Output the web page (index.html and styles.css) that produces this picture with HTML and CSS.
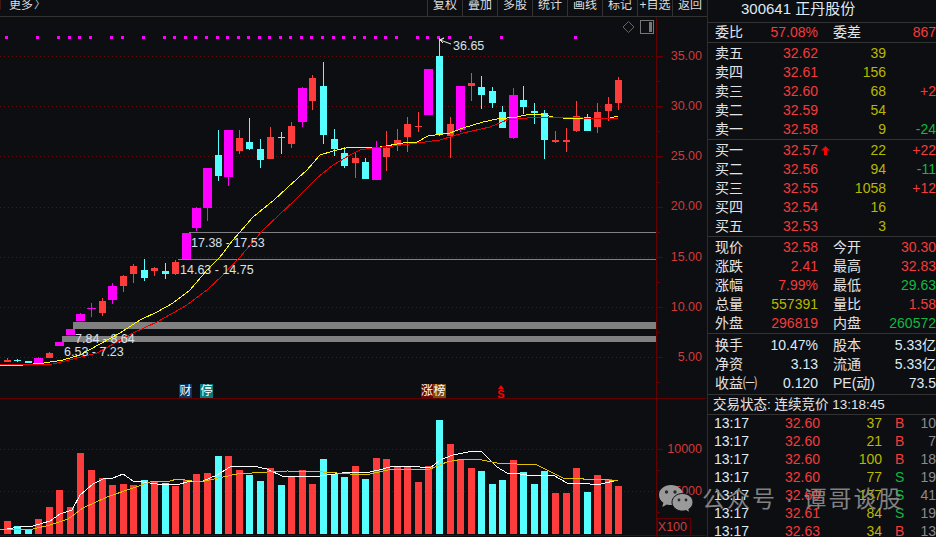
FILE: index.html
```html
<html>

<head>
  <meta charset="utf-8">
  <link rel="stylesheet" href="styles.css">
</head>

<body>
  <div class="wrapper">
    <div class="left">
      <div class="toolbar">
        <div class="crumb"><span class="cut">月</span><span>更多</span><span class="chev">〉</span></div>
        <div class="tool">复权</div>
        <div class="tool">叠加</div>
        <div class="tool">多股</div>
        <div class="tool">统计</div>
        <div class="tool">画线</div>
        <div class="tool">标记</div>
        <div class="tool">+自选</div>
        <div class="tool">返回</div>
      </div>
      <svg id="chart" class="chart" viewBox="0 17 706 520" width="706" height="520"></svg>
    </div>

    <div class="side">
      <div class="title">300641 正丹股份</div>

      <div class="stat top-stat">
        <span>委比</span><span class="num red">57.08%</span><span class="lbl2">委差</span><span class="num red">867</span>
      </div>

      <div class="block" id="sell"></div>
      <div class="block" id="buy"></div>

      <div class="block">
        <div class="stat"><span>现价</span><span class="num red">32.58</span><span class="lbl2">今开</span><span class="num red">30.30</span></div>
        <div class="stat"><span>涨跌</span><span class="num red">2.41</span><span class="lbl2">最高</span><span class="num red">32.83</span></div>
        <div class="stat"><span>涨幅</span><span class="num red">7.99%</span><span class="lbl2">最低</span><span class="num green">29.63</span></div>
        <div class="stat"><span>总量</span><span class="num olive">557391</span><span class="lbl2">量比</span><span class="num red">1.58</span></div>
        <div class="stat"><span>外盘</span><span class="num red">296819</span><span class="lbl2">内盘</span><span class="num green">260572</span></div>
      </div>

      <div class="block finance">
        <div class="stat"><span>换手</span><span class="num white">10.47%</span><span class="lbl2">股本</span><span class="num white">5.33亿</span></div>
        <div class="stat"><span>净资</span><span class="num white">3.13</span><span class="lbl2">流通</span><span class="num white">5.33亿</span></div>
        <div class="stat"><span>收益㈠</span><span class="num white">0.120</span><span class="lbl2">PE(动)</span><span class="num white">73.5</span></div>
      </div>

      <div class="status">交易状态: 连续竞价 13:18:45</div>

      <div id="trades"></div>
    </div>

    <div class="mark">
      <svg class="mark-icon" viewBox="0 0 36 30" width="36" height="30">
        <path class="bubble" d="M13 1C6 1 1 5.500 1 11c0 3.200 1.700 5.900 4.400 7.800L4.200 23l4.700-2.500c1.300.4 2.700.6 4.100.6 6.700 0 12-4.500 12-10.100S19.700 1 13 1z" />
        <circle class="eye" cx="8.500" cy="8" r="1.700" />
        <circle class="eye" cx="17" cy="8" r="1.700" />
        <path class="bubble front" d="M24.500 9.500c-5.800 0-10.500 3.900-10.500 8.800s4.700 8.800 10.500 8.800c1.200 0 2.400-.2 3.500-.5l3.800 2.100-1-3.400c2.500-1.600 4.200-4.100 4.200-7 0-4.900-4.700-8.800-10.500-8.800z" />
        <circle class="eye" cx="21" cy="16" r="1.400" />
        <circle class="eye" cx="28" cy="16" r="1.400" />
      </svg>
      <span class="mark-text">公众号 · 谭哥谈股</span>
    </div>
  </div>

  <script src="chart.js"></script>
</body>

</html>
```

FILE: styles.css
```css
body {
  margin: 0;
  background: #0d0e12;
  color: #e4e4e4;
  font-family: "Liberation Sans", "Noto Sans CJK SC", sans-serif;
  font-size: 14px;
  overflow: hidden;
}

.wrapper {
  display: flex;
  position: relative;
  width: 936px;
  height: 537px;
  overflow: hidden;
}

.left {
  width: 707px;
  flex: none;
}

.toolbar {
  display: flex;
  height: 16px;
  border-bottom: 1px solid #333;
  font-size: 12px;
  line-height: 11px;
  color: #dcdcdc;
  overflow: hidden;
}

.crumb {
  flex: 1;
  display: flex;
  overflow: hidden;
}

.cut {
  margin-left: -10px;
  margin-right: 7px;
}

.chev {
  color: #8fc4e8;
  margin-left: 1px;
}

.tool {
  width: 34px;
  text-align: center;
  border-left: 1px solid #333;
  white-space: nowrap;
}

.chart {
  display: block;
}

.grid {
  stroke: #6a0c0c;
  stroke-width: 1;
  stroke-dasharray: 1 3;
}

.axis {
  stroke: #640000;
  stroke-width: 1;
}

.level {
  stroke: #808080;
  stroke-width: 1;
}

.ma {
  fill: none;
  stroke-width: 1;
}

.ma-yellow {
  stroke: #ffff00;
}

.ma-red {
  stroke: #f00000;
}

.vol-white {
  stroke: #ffffff;
}

.vol-yellow {
  stroke: #e0c000;
}

.axis-text {
  fill: #d03a3a;
  font-size: 12.500px;
  text-anchor: end;
}

.level-text {
  fill: #d8e0e8;
  font-size: 12.500px;
}

.tag-text {
  fill: #ffffff;
  font-size: 12px;
  text-anchor: middle;
}

.s-text {
  fill: #ff0000;
  font-size: 11px;
  font-weight: bold;
  text-anchor: middle;
}

.side {
  width: 229px;
  flex: none;
  box-sizing: border-box;
  border-left: 1px solid #2c2c2c;
  overflow: hidden;
}

.title {
  height: 22px;
  line-height: 17px;
  padding-left: 33px;
  border-bottom: 1px solid #333;
  font-size: 15px;
  color: #dfeaf2;
}

.stat,
.quote {
  display: grid;
  height: 19px;
  line-height: 21px;
  padding-left: 7px;
  white-space: nowrap;
}

.stat {
  grid-template-columns: 40px 63px 60px 1fr;
}

.top-stat {
  line-height: 19px;
  border-bottom: 1px solid #333;
}

.quote {
  grid-template-columns: 40px 63px 68px 1fr;
}

.lbl2 {
  margin-left: 15px;
}

.block {
  padding-bottom: 1px;
  border-bottom: 1px solid #333;
}

.finance {
  padding-top: 1px;
  padding-bottom: 2px;
}

.num {
  text-align: right;
}

.price-cell {
  position: relative;
}

.arrow {
  position: absolute;
  left: 66px;
  top: 6px;
}

.status {
  height: 19px;
  line-height: 20px;
  padding-left: 5px;
  border-bottom: 1px solid #333;
  font-size: 13.500px;
}

.trade {
  display: grid;
  grid-template-columns: 40px 66px 62px 14px 1fr;
  height: 18px;
  line-height: 16px;
  padding-left: 6px;
  white-space: nowrap;
}

.trade .flag {
  padding-left: 13px;
}

.trade .seq {
  color: #8a8a8a;
  text-align: right;
}

.red {
  color: #f53a3a;
}

.green {
  color: #10b840;
}

.olive {
  color: #b8b800;
}

.white {
  color: #dcecf6;
}

.mark {
  position: absolute;
  left: 658px;
  top: 484px;
  display: flex;
  align-items: center;
  gap: 8px;
  pointer-events: none;
}

.mark-text {
  font-size: 23px;
  line-height: 26px;
  letter-spacing: 2px;
  color: #8b8b8b;
  opacity: .92;
  white-space: nowrap;
}

.bubble {
  fill: #9a9a9a;
}

.bubble.front {
  stroke: #0d0e12;
  stroke-width: 1;
}

.eye {
  fill: #2a2a2a;
}
```

FILE: chart.js
```js
/*---------------- candles: left, bodyTop, bodyBottom, wickTop, wickBottom, type, volumeTop ----------------*/
const candles = [
  [4, 360, 362, 358, 362, 'r', 521],
  [14, 360, 361, 359, 362, 'c', 526],
  [25, 361, 363, 361, 363, 'c', 529],
  [34, 358, 364, 357, 364, 'm', 519],
  [46, 353, 358, 352, 358, 'r', 507],
  [55, 342, 346, 342, 346, 'm', 490],
  [66, 329, 335, 329, 335, 'm', 507],
  [76, 314, 321, 313, 321, 'm', 453],
  [87, 308, 309, 303, 317, 'm', 470],
  [99, 301, 313, 298, 316, 'r', 478],
  [108, 286, 300, 283, 304, 'm', 485],
  [120, 276, 286, 275, 292, 'r', 484],
  [130, 266, 274, 264, 283, 'r', 485],
  [141, 270, 278, 259, 281, 'c', 480],
  [151, 268, 271, 267, 276, 'r', 481],
  [162, 271, 274, 263, 279, 'c', 483],
  [172, 262, 274, 260, 275, 'r', 486],
  [182, 233, 259, 233, 259, 'm', 480],
  [192, 208, 228, 207, 231, 'm', 474],
  [203, 168, 208, 168, 221, 'm', 473],
  [215, 155, 176, 130, 181, 'c', 456],
  [224, 130, 177, 130, 186, 'm', 456],
  [236, 138, 151, 130, 154, 'r', 470],
  [246, 142, 149, 118, 150, 'c', 475],
  [257, 149, 160, 139, 168, 'c', 481],
  [267, 137, 159, 127, 159, 'r', 468],
  [278, 137, 138, 132, 154, 'c', 485],
  [288, 126, 144, 122, 148, 'r', 477],
  [298, 88, 122, 87, 127, 'm', 470],
  [309, 78, 101, 75, 110, 'r', 484],
  [320, 86, 135, 62, 144, 'c', 459],
  [331, 139, 149, 129, 156, 'c', 474],
  [341, 153, 166, 147, 168, 'c', 477],
  [352, 158, 163, 153, 178, 'r', 466],
  [362, 162, 179, 158, 179, 'c', 479],
  [372, 147, 180, 141, 180, 'm', 458],
  [383, 148, 157, 131, 171, 'r', 459],
  [394, 140, 146, 129, 151, 'r', 466],
  [404, 124, 137, 117, 152, 'r', 466],
  [415, 126, 127, 112, 132, 'r', 482],
  [424, 69, 115, 69, 115, 'm', 466],
  [436, 56, 134, 38, 136, 'c', 420],
  [447, 124, 136, 117, 158, 'r', 444],
  [456, 86, 130, 86, 132, 'm', 459],
  [468, 83, 86, 73, 101, 'r', 468],
  [478, 87, 95, 76, 109, 'c', 471],
  [489, 91, 103, 87, 108, 'c', 484],
  [499, 112, 128, 106, 128, 'c', 480],
  [509, 95, 138, 88, 139, 'm', 460],
  [520, 100, 107, 86, 114, 'c', 472],
  [531, 111, 113, 103, 124, 'c', 484],
  [541, 113, 140, 110, 159, 'c', 471],
  [552, 140, 142, 131, 143, 'r', 493],
  [563, 140, 142, 128, 152, 'r', 493],
  [573, 116, 131, 101, 132, 'r', 468],
  [584, 117, 131, 114, 131, 'c', 492],
  [594, 112, 127, 103, 133, 'r', 475],
  [605, 104, 111, 97, 121, 'r', 479],
  [615, 80, 103, 77, 110, 'r', 486]
];

const colors = { r: '#ff3c3c', c: '#55ffff', m: '#ff00ff' };

const dots = [6, 37, 58, 69, 79, 90, 111, 122, 143, 164, 174, 185, 195, 206, 217, 227, 238, 248, 259, 269, 280, 290, 301, 311, 322, 333, 343, 354, 364, 375, 385, 396, 417, 427, 438, 449, 470, 501, 575];

/*---------------- moving averages ----------------*/
const maYellow = '0,365 23,365 44,363 63,360 80,355 100,344 120,333 140,320 157,312 173,303 190,290 207,270 220,257 233,240 253,217 274,200 287,188 307,170 320,155 333,151 350,147 380,147 403,143 417,142 428,136 450,133 463,128 483,122 497,119 517,117 530,114 540,114 553,117 563,118 583,119 610,118 618,116';
const maRed = '0,365 53,364 73,359 97,353 133,333 157,322 187,305 207,290 223,275 240,257 263,230 295,200 317,178 333,165 350,155 360,150 372,148 393,146 417,143 440,140 463,133 490,127 507,120 537,117 570,117 583,118 610,119 618,118';
const volWhite = '0,530 20,527 33,526 50,521 60,514 72,510 80,495 93,484 103,479 113,478 123,474 133,481 143,482 157,484 180,484 187,482 203,481 217,475 230,467 253,466 267,469 282,476 297,477 307,476 313,477 327,475 350,472 370,472 383,469 393,466 410,466 430,468 440,460 453,455 473,451 482,452 497,467 507,473 520,474 533,476 553,475 567,483 583,483 597,485 618,480';
const volYellow = '0,529 33,529 50,525 68,519 83,508 107,497 133,488 150,482 170,481 177,479 200,482 223,477 237,474 267,472 287,471 323,472 350,474 370,474 383,471 393,469 430,469 447,462 463,459 477,459 497,463 537,465 563,478 580,478 587,480 600,479 618,481';

/*---------------- helpers ----------------*/
const svg = document.getElementById('chart');
const NS = 'http://www.w3.org/2000/svg';

const add = (tag, attrs, text) => {
  const el = document.createElementNS(NS, tag);
  for (const k in attrs) el.setAttribute(k, attrs[k]);
  if (text) el.textContent = text;
  svg.appendChild(el);
  return el;
};

const rect = (x, y, w, h, fill) =>
  add('rect', { x: x, y: y, width: w, height: h, fill: fill, 'shape-rendering': 'crispEdges' });

const line = (x1, y1, x2, y2, cls) =>
  add('line', { x1: x1, y1: y1, x2: x2, y2: y2, class: cls, 'shape-rendering': 'crispEdges' });

/*---------------- grid and axis ----------------*/
[56.5, 106.5, 156.5, 207.5, 257.5, 307.5, 357.5, 449.5, 491.5].forEach(y => line(0, y, 656, y, 'grid'));

line(656.5, 17, 656.5, 537, 'axis');
line(0, 398.5, 706, 398.5, 'axis');
line(0, 535.5, 706, 535.5, 'axis');

[56.5, 81.5, 106.5, 131.5, 156.5, 182.5, 207.5, 232.5, 257.5, 282.5, 307.5, 332.5, 357.5, 382.5].forEach((y, i) =>
  line(657, y, i % 2 ? 660 : 663, y, 'axis')
);
[449.5, 470.5, 491.5, 512.5].forEach((y, i) => line(657, y, i % 2 ? 660 : 663, y, 'axis'));

[['35.00', 60], ['30.00', 110], ['25.00', 160], ['20.00', 210], ['15.00', 261], ['10.00', 311], ['5.00', 361], ['10000', 453], ['5000', 495]].forEach(a =>
  add('text', { x: 702, y: a[1], class: 'axis-text' }, a[0])
);

add('rect', { x: 657.5, y: 518.5, width: 33, height: 17, fill: 'none', stroke: '#640000' });
add('text', { x: 687, y: 531, class: 'axis-text' }, 'X100');

/* diamond and panel switch, top right of the chart */
add('polygon', { points: '628.5,21.5 634,27 628.5,32.5 623,27', fill: 'none', stroke: '#666' });
add('rect', { x: 640.5, y: 20.5, width: 13, height: 13, fill: 'none', stroke: '#777' });
rect(649, 22, 3, 10, '#777');

/*---------------- price levels ----------------*/
line(189, 232.5, 656, 232.5, 'level');
line(178, 259.5, 656, 259.5, 'level');
rect(73, 322, 583, 7, '#808080');
rect(62, 336, 594, 6, '#808080');

/*---------------- candles and volume ----------------*/
dots.forEach(x => rect(x - 1, 36, 3, 3, '#ff00ff'));

candles.forEach(c => {
  const w = c[5] == 'm' ? 9 : 7;
  const mid = c[0] + Math.floor(w / 2);
  rect(mid, c[3], 1, c[4] - c[3], colors[c[5]]);
  rect(c[0], c[1], w, c[2] - c[1], colors[c[5]]);
  // volume bar keeps the candle colour, magenta days count as red
  rect(mid - 3, c[6], 7, 534 - c[6], c[5] == 'c' ? colors.c : colors.r);
});

[[maYellow, 'ma-yellow'], [maRed, 'ma-red'], [volWhite, 'vol-white'], [volYellow, 'vol-yellow']].forEach(m =>
  add('polyline', { points: m[0], class: 'ma ' + m[1], 'shape-rendering': 'crispEdges' })
);

/*---------------- labels ----------------*/
[['36.65', 453, 50], ['17.38 - 17.53', 191, 247], ['14.63 - 14.75', 180, 274], ['7.84 - 8.64', 75, 343], ['6.53 - 7.23', 64, 356]].forEach(l =>
  add('text', { x: l[1], y: l[2], class: 'level-text' }, l[0])
);
add('polyline', { points: '451,44 440,40 444,38 440,40 443,43', fill: 'none', stroke: '#e8e8e8' });

[['财', 179, 13, '#0a3560'], ['停', 200, 13, '#0a7a7a'], ['涨', 421, 12, '#6a0505'], ['榜', 433, 13, '#7a4a08']].forEach(t => {
  rect(t[1], 384, t[2], 14, t[3]);
  add('text', { x: t[1] + t[2] / 2, y: 395, class: 'tag-text' }, t[0]);
});
add('polygon', { points: '501,385 504,389 498,389', fill: '#ff0000' });
add('text', { x: 501, y: 398, class: 's-text' }, 'S');

/*---------------- order book ----------------*/
const sell = [
  ['卖五', '32.62', '39', '', ''],
  ['卖四', '32.61', '156', '', ''],
  ['卖三', '32.60', '68', '+2', 'red'],
  ['卖二', '32.59', '54', '', ''],
  ['卖一', '32.58', '9', '-24', 'green']
];
const buy = [
  ['买一', '32.57', '22', '+22', 'red'],
  ['买二', '32.56', '94', '-11', 'green'],
  ['买三', '32.55', '1058', '+12', 'red'],
  ['买四', '32.54', '16', '', ''],
  ['买五', '32.53', '3', '', '']
];

const arrow = '<svg class="arrow" width="9" height="9" viewBox="0 0 9 9"><path d="M4.500 0L9 4.500H6V9H3V4.500H0z" fill="#ff0000"/></svg>';

const quoteRows = (rows, withArrow) =>
  rows.map((r, i) =>
    '<div class="quote"><span>' + r[0] + '</span>' +
    '<span class="num red price-cell">' + r[1] + (withArrow && i == 0 ? arrow : '') + '</span>' +
    '<span class="num olive">' + r[2] + '</span>' +
    '<span class="num ' + r[4] + '">' + r[3] + '</span></div>'
  ).join('');

document.getElementById('sell').innerHTML = quoteRows(sell, false);
document.getElementById('buy').innerHTML = quoteRows(buy, true);

/*---------------- trades ----------------*/
const trades = [
  ['32.60', '37', 'B', '10'],
  ['32.60', '21', 'B', '7'],
  ['32.60', '100', 'B', '18'],
  ['32.60', '77', 'S', '19'],
  ['32.60', '157', 'S', '41'],
  ['32.61', '84', 'S', '19'],
  ['32.63', '34', 'B', '13']
];

document.getElementById('trades').innerHTML = trades.map(t =>
  '<div class="trade"><span class="white">13:17</span>' +
  '<span class="num red">' + t[0] + '</span>' +
  '<span class="num olive">' + t[1] + '</span>' +
  '<span class="flag ' + (t[2] == 'B' ? 'red' : 'green') + '">' + t[2] + '</span>' +
  '<span class="seq">' + t[3] + '</span></div>'
).join('');
```
